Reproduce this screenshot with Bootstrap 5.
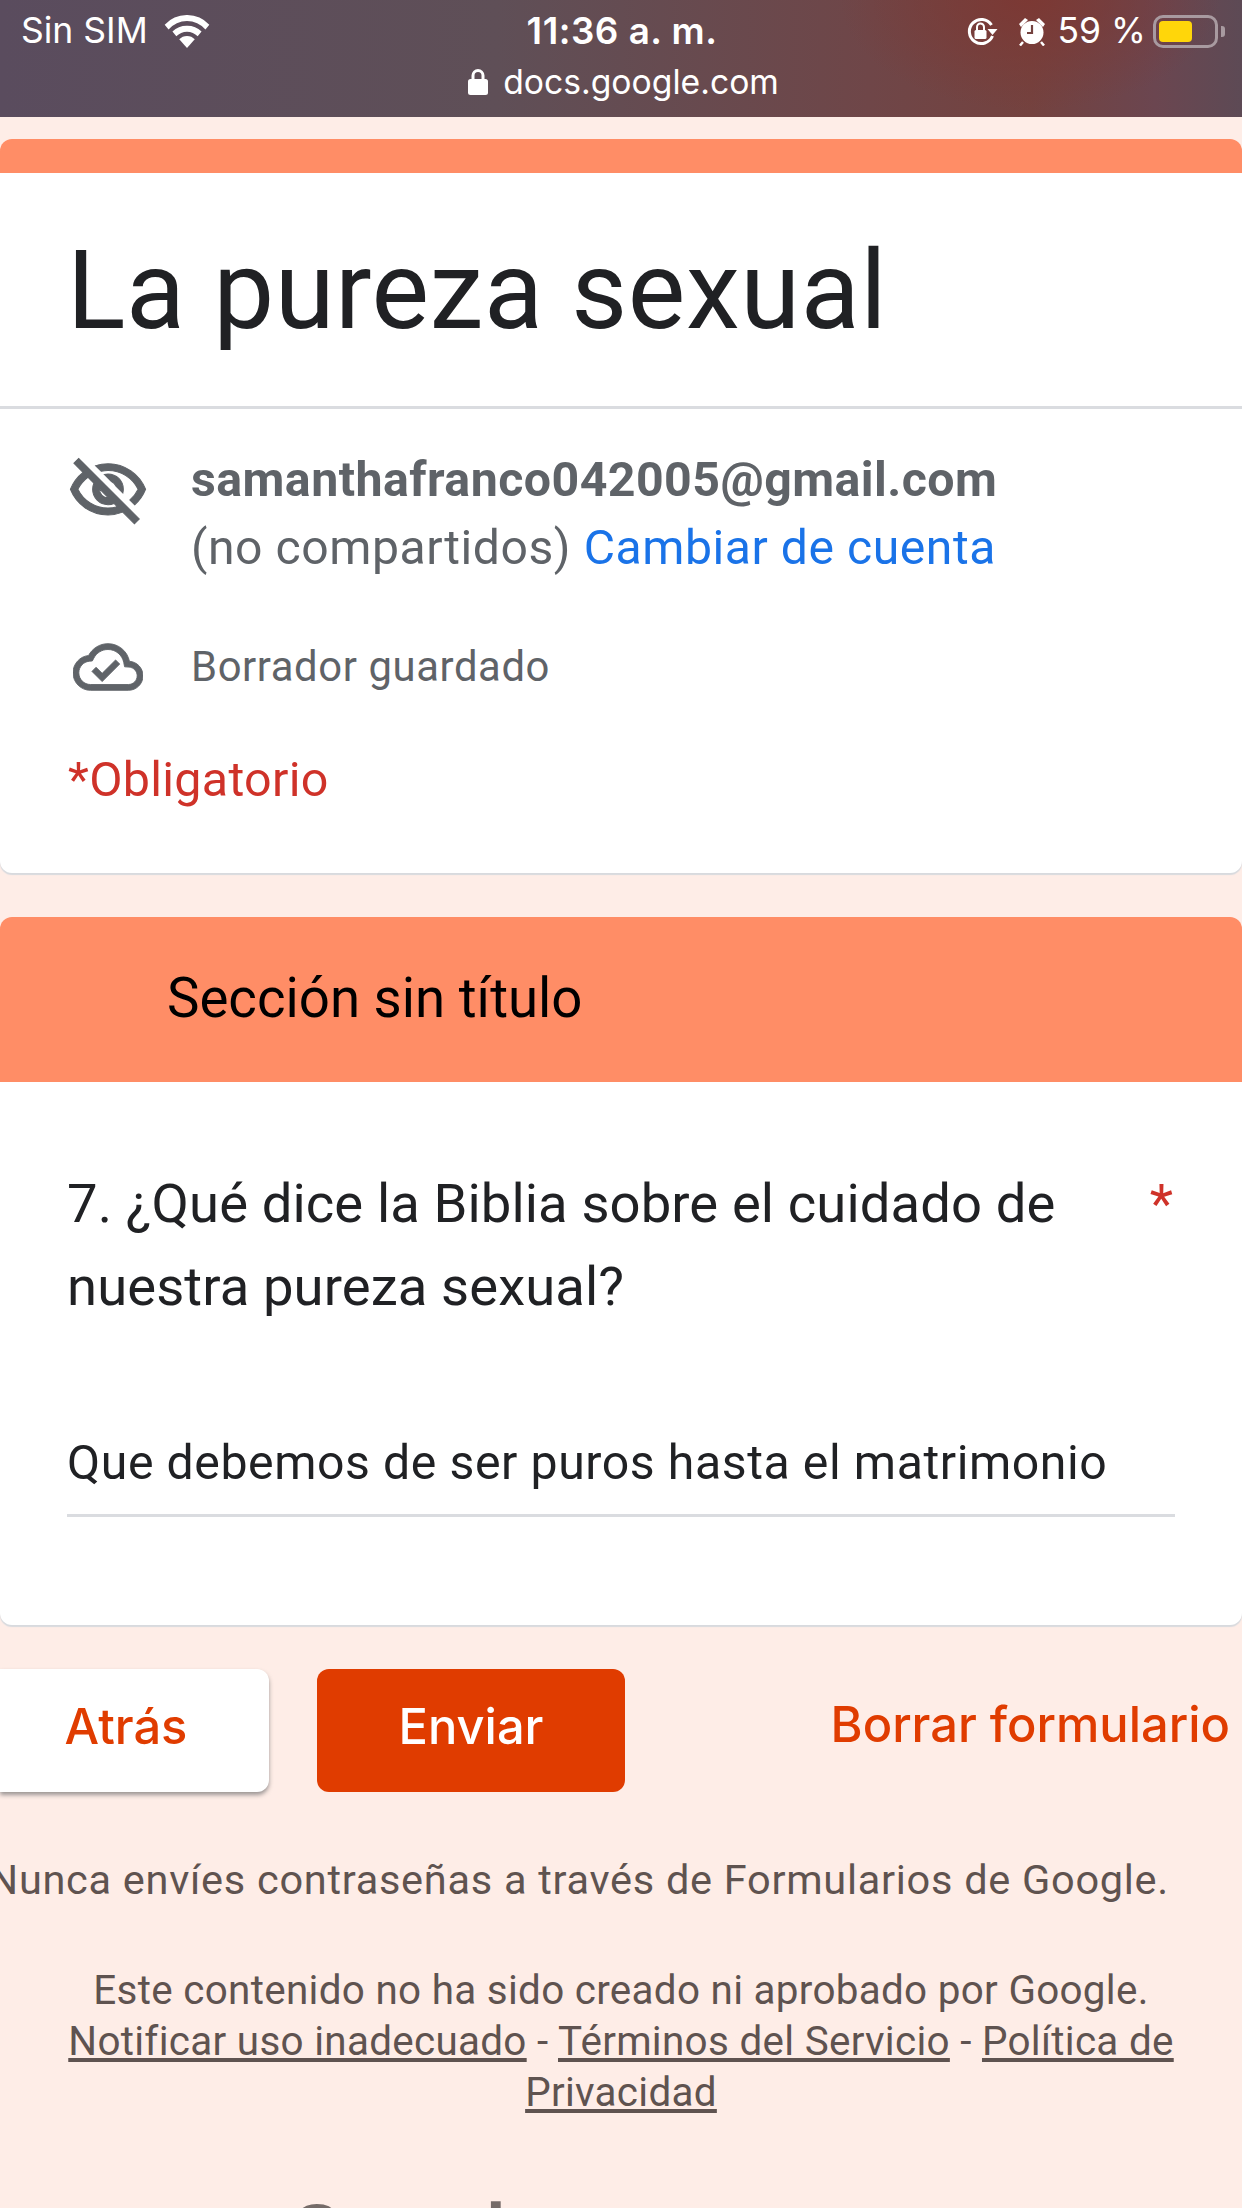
<!DOCTYPE html>
<html lang="es">
<head>
<meta charset="utf-8">
<title>La pureza sexual</title>
<link rel="stylesheet" href="https://cdn.jsdelivr.net/npm/bootstrap@5.3.0/dist/css/bootstrap.min.css">
<style>
html,body{height:2208px;overflow:hidden}
body{background:#feede7;font-family:Roboto,"Liberation Sans",sans-serif;width:1242px}
.statusbar{height:117px;background:radial-gradient(ellipse 190px 110px at 1030px 0,rgba(125,55,50,.85),rgba(125,55,50,0)),linear-gradient(90deg,#5a4c5e 0%,#5f4f57 40%,#6f4648 70%,#74423f 83%,#6b4650 93%,#5d4a55 100%);color:#fff;font-family:Inter,"Liberation Sans",sans-serif}
.sb-row{height:62px;padding:0 16px 0 21px;font-size:35.5px}
.sb-side{width:400px}
.sb-time{font-weight:600;font-size:36.8px;letter-spacing:.5px;margin-right:3px}
.sb-url{font-size:33.7px;line-height:40px;margin-top:0;padding-left:5px;gap:15px}
.ic-alarm{margin-left:19px}
.sb-pct{margin-left:11px}
.bat{width:65px;height:33px;border:3px solid #a89aa0;border-radius:10px;padding:3px;margin-left:7px;margin-right:8px;position:relative}
.bat::after{content:"";position:absolute;right:-10px;top:8px;width:4px;height:11px;background:#a89aa0;border-radius:0 3px 3px 0}
.bat-fill{width:33px;height:100%;background:#ffd60a;border-radius:4px}
.topband{height:34px;margin-top:22px;background:#ff8d66;border-radius:12px 12px 0 0}
.sheet{background:#fff;margin-bottom:44px;border-radius:0 0 12px 12px;box-shadow:0 2px 1px 0 #d8dade}
.title-area{height:236px;padding:54px 67px 0;border-bottom:3px solid #dadce0}
.form-title{font-size:108.5px;line-height:128px;color:#202124;font-weight:400;letter-spacing:.6px;margin:0}
.acct{padding:37px 68px 0;height:464px;color:#5f6368}
.icon-slot{width:123px;flex:none}
.ic-eye{margin:4px 0 0 -1px}
.ic-cloud{margin-left:5px}
.ic-eye path,.ic-cloud path{stroke:#5f6368;stroke-width:.3}
.acct-mail{font-size:48.3px;line-height:68px;font-weight:700;color:#5f6368;letter-spacing:.45px;white-space:nowrap}
.acct-sub{font-size:48.1px;line-height:68px;letter-spacing:.55px;white-space:nowrap}
.acct-link{color:#1a73e8;text-decoration:none}
.draft{font-size:41.8px;letter-spacing:.6px;margin-top:60px;height:50px}
.required-note{color:#cf3229;font-size:48.4px;line-height:56px;letter-spacing:.3px;margin-top:60px}
.sec-head{background:#ff8d66;height:165px;border-radius:12px 12px 0 0;padding:0 167px 2px;font-size:54.6px;color:#000}
.q-card{height:543px;padding:80px 67px 0;position:relative;background:#fff;border-radius:0 0 12px 12px;box-shadow:0 2px 1px 0 #d8dade}
.q-text{font-size:54.4px;line-height:83px;color:#202124;width:1040px;letter-spacing:.1px;margin:0}
.q-star{position:absolute;right:69px;top:80px;color:#cf3229;font-size:54px;line-height:83px}
.q-answer{margin-top:98px;height:91px;border-bottom:3px solid #dadce0;font-size:48.2px;line-height:66px;color:#202124;padding-top:4px;letter-spacing:.58px;white-space:nowrap}
.actions{padding:44px 0 0;height:167px}
.btn-back,.btn-send{height:123px;font-family:Inter,Lato,sans-serif;font-size:48.8px;font-weight:500;border:0;padding:0 0 8px;border-radius:12px}
.btn-back{width:269px;background:#fff;color:#e03c00;border-radius:0 12px 12px 0;box-shadow:0 3px 4px rgba(60,64,67,.5);padding-right:17px}
.btn-back:hover{background:#fff;color:#e03c00}
.btn-send{width:308px;background:#e03c00;color:#fff;margin-left:48px}
.btn-clear{margin-left:auto;margin-right:12px;color:#e03c00;font-family:Inter,Lato,sans-serif;font-size:48.8px;font-weight:500;line-height:112px;text-decoration:none;white-space:nowrap}
.foot{color:#5f5350;font-size:41.5px;letter-spacing:.72px;text-align:center}
.never{white-space:nowrap;margin-top:64px;line-height:48px;width:1169px;display:flex;justify-content:flex-end}
.disclaimer{margin:61px 68px 0;line-height:51px;font-size:40.4px;letter-spacing:.3px}
.disclaimer a{color:#5f5350}
.brand{margin-top:78px;font-size:74px;line-height:80px;color:#756b68;white-space:nowrap;letter-spacing:0}
.brand-g{font-weight:500;font-size:82.7px;margin-right:-10px}
</style>
</head>
<body>
<div class="statusbar">
  <div class="sb-row d-flex align-items-center justify-content-between">
    <div class="sb-side d-flex align-items-center"><span>Sin SIM</span>
      <svg class="ms-3" width="46" height="33" viewBox="0 0 46 34" fill="#fff"><path d="M23 34l-8-9a11 11 0 0 1 16 0z"/><path d="M23 11a21 21 0 0 1 15 6l-4 5a15 15 0 0 0-22 0l-4-5a21 21 0 0 1 15-6z"/><path d="M23 0a31 31 0 0 1 23 10l-4 5a25 25 0 0 0-38 0l-4-5A31 31 0 0 1 23 0z"/></svg>
    </div>
    <div class="sb-time">11:36 a. m.</div>
    <div class="sb-side d-flex align-items-center justify-content-end">
      <svg width="32" height="28" viewBox="0 0 31 28"><path d="M26 19A12 12 0 1 1 25 8" fill="none" stroke="#fff" stroke-width="3"/><path d="M21 12h10l-5 6z" fill="#fff"/><rect x="8" y="13" width="12" height="9" rx="1.500" fill="#fff"/><path d="M10.500 13V10a3.500 3.500 0 0 1 7 0V13" fill="none" stroke="#fff" stroke-width="2"/></svg>
      <svg width="30" height="29" viewBox="0 0 28 29" class="ic-alarm"><circle cx="14" cy="15.500" r="11.500" fill="#fff"/><path d="M14 8v8H9" fill="none" stroke="#74423f" stroke-width="2.200"/><path d="M1 7l6-6 3 2-7 7zM27 7l-6-6-3 2 7 7z" fill="#fff"/><path d="M5 25l-3 3.500M23 25l3 3.500" stroke="#fff" stroke-width="2.500"/></svg>
      <span class="sb-pct">59 %</span>
      <div class="bat"><div class="bat-fill"></div></div>
    </div>
  </div>
  <div class="sb-url d-flex align-items-center justify-content-center">
    <svg width="20" height="28" viewBox="0 0 20 28"><rect x="0" y="11" width="20" height="16" rx="2.500" fill="#fff"/><path d="M5 12V7.500a5 5 0 0 1 10 0V12" fill="none" stroke="#fff" stroke-width="3"/></svg>
    <span>docs.google.com</span>
  </div>
</div>

<div class="topband"></div>
<main class="sheet">
  <div class="title-area"><h1 class="form-title">La pureza sexual</h1></div>
  <div class="acct">
    <div class="d-flex">
      <div class="icon-slot">
        <svg class="ic-eye" width="82" height="82" viewBox="0 0 24 24" fill="#5f6368"><path d="M12 6c3.790 0 7.170 2.130 8.820 5.500-.59 1.220-1.420 2.270-2.410 3.120l1.410 1.410c1.390-1.230 2.490-2.770 3.180-4.530C21.270 7.110 17 4 12 4c-1.270 0-2.490.2-3.640.57l1.650 1.650C10.660 6.090 11.320 6 12 6zm-1.070 1.140L13 9.210c.57.25 1.030.71 1.280 1.280l2.070 2.070c.08-.34.14-.7.14-1.070C16.500 9.010 14.480 7 12 7c-.37 0-.72.05-1.070.14zM2.010 3.870l2.680 2.680C3.060 7.830 1.770 9.530 1 11.500 2.730 15.890 7 19 12 19c1.520 0 2.980-.29 4.320-.82l3.420 3.420 1.410-1.410L3.420 2.450 2.010 3.870zm7.500 7.500l2.610 2.610c-.04.01-.08.02-.12.02-1.380 0-2.500-1.120-2.500-2.500 0-.05.01-.08.01-.13zm-3.400-3.400l1.750 1.750c-.23.55-.36 1.150-.36 1.780 0 2.480 2.020 4.500 4.500 4.500.63 0 1.230-.13 1.770-.36l.98.98c-.88.24-1.800.38-2.750.38-3.790 0-7.170-2.130-8.820-5.500.7-1.430 1.720-2.610 2.930-3.530z"/></svg>
      </div>
      <div>
        <div class="acct-mail">samanthafranco042005@gmail.com</div>
        <div class="acct-sub">(no compartidos) <a href="#" class="acct-link">Cambiar de cuenta</a></div>
      </div>
    </div>
    <div class="draft d-flex align-items-center">
      <div class="icon-slot">
        <svg class="ic-cloud" width="70" height="70" viewBox="0 0 24 24" fill="#5f6368"><path d="M19.350 10.040C18.670 6.590 15.640 4 12 4 9.110 4 6.600 5.640 5.350 8.040 2.340 8.360 0 10.910 0 14c0 3.310 2.690 6 6 6h13c2.760 0 5-2.240 5-5 0-2.640-2.050-4.780-4.650-4.960zM19 18H6c-2.210 0-4-1.790-4-4 0-2.050 1.530-3.760 3.560-3.970l1.070-.11.5-.95C8.080 7.140 9.940 6 12 6c2.620 0 4.880 1.860 5.390 4.430l.3 1.500 1.530.11c1.560.1 2.780 1.410 2.780 2.960 0 1.650-1.350 3-3 3zm-9-3.820l-2.090-2.090L6.500 13.500 10 17l6.010-6.010-1.410-1.410z"/></svg>
      </div>
      <span>Borrador guardado</span>
    </div>
    <div class="required-note">*Obligatorio</div>
  </div>
</main>

<section>
  <div class="sec-head d-flex align-items-center">Sección sin título</div>
  <div class="q-card">
    <p class="q-text">7. ¿Qué dice la Biblia sobre el cuidado de nuestra pureza sexual?</p>
    <span class="q-star">*</span>
    <div class="q-answer">Que debemos de ser puros hasta el matrimonio</div>
  </div>
</section>

<div class="actions d-flex align-items-start">
  <button type="button" class="btn btn-back">Atrás</button>
  <button type="button" class="btn btn-send">Enviar</button>
  <a href="#" class="btn-clear">Borrar formulario</a>
</div>

<footer class="foot">
  <div class="never">Nunca envíes contraseñas a través de Formularios de Google.</div>
  <div class="disclaimer">Este contenido no ha sido creado ni aprobado por Google.<br><a href="#">Notificar uso inadecuado</a> - <a href="#">Términos del Servicio</a> - <a href="#">Política de Privacidad</a></div>
  <div class="brand"><span class="brand-g">Google</span> Formularios</div>
</footer>
<script src="https://cdn.jsdelivr.net/npm/bootstrap@5.3.0/dist/js/bootstrap.bundle.min.js"></script>
</body>
</html>
